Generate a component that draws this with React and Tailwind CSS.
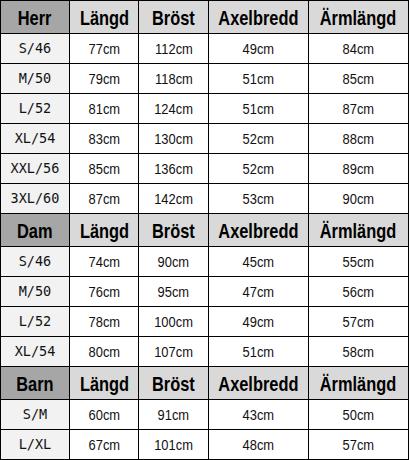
const columns = ['Längd', 'Bröst', 'Axelbredd', 'Ärmlängd']

const sections = [
  {
    name: 'Herr',
    rows: [
      ['S/46', 77, 112, 49, 84],
      ['M/50', 79, 118, 51, 85],
      ['L/52', 81, 124, 51, 87],
      ['XL/54', 83, 130, 52, 88],
      ['XXL/56', 85, 136, 52, 89],
      ['3XL/60', 87, 142, 53, 90],
    ],
  },
  {
    name: 'Dam',
    rows: [
      ['S/46', 74, 90, 45, 55],
      ['M/50', 76, 95, 47, 56],
      ['L/52', 78, 100, 49, 57],
      ['XL/54', 80, 107, 51, 58],
    ],
  },
  {
    name: 'Barn',
    rows: [
      ['S/M', 60, 91, 43, 50],
      ['L/XL', 67, 101, 48, 57],
    ],
  },
]

function HeadText({ children }) {
  return (
    <span className="inline-block [transform:scaleX(0.78)] font-['Liberation_Sans',Arial,sans-serif] text-[21px] font-bold leading-none text-black">
      {children}
    </span>
  )
}

export default function App() {
  return (
    <div className="w-[410px] h-[460px] bg-white">
      <div className="grid w-[409px] grid-cols-[68px_68px_69px_99px_99px] gap-px bg-black p-px">
        {sections.map((section) => (
          <>
            {/* header row */}
            <div key={section.name} className="flex h-[32px] items-center justify-center bg-[#a6a6a6]">
              <HeadText>{section.name}</HeadText>
            </div>
            {columns.map((col) => (
              <div key={section.name + col} className="flex h-[32px] items-center justify-center bg-[#d9d9d9]">
                <HeadText>{col}</HeadText>
              </div>
            ))}

            {section.rows.map((row) => (
              <>
                <div
                  key={section.name + row[0]}
                  className="flex h-[29px] items-center justify-center bg-[#f2f2f2] font-['DejaVu_Sans_Mono',monospace] text-[13.5px] text-[#111]"
                >
                  {row[0]}
                </div>
                {row.slice(1).map((v, i) => (
                  <div key={section.name + row[0] + i} className="flex h-[29px] items-center justify-center bg-white">
                    <span className="inline-block [transform:scaleX(0.86)] font-['Liberation_Sans',Arial,sans-serif] text-[15px] leading-none text-[#111]">
                      {v}cm
                    </span>
                  </div>
                ))}
              </>
            ))}
          </>
        ))}
      </div>
    </div>
  )
}
